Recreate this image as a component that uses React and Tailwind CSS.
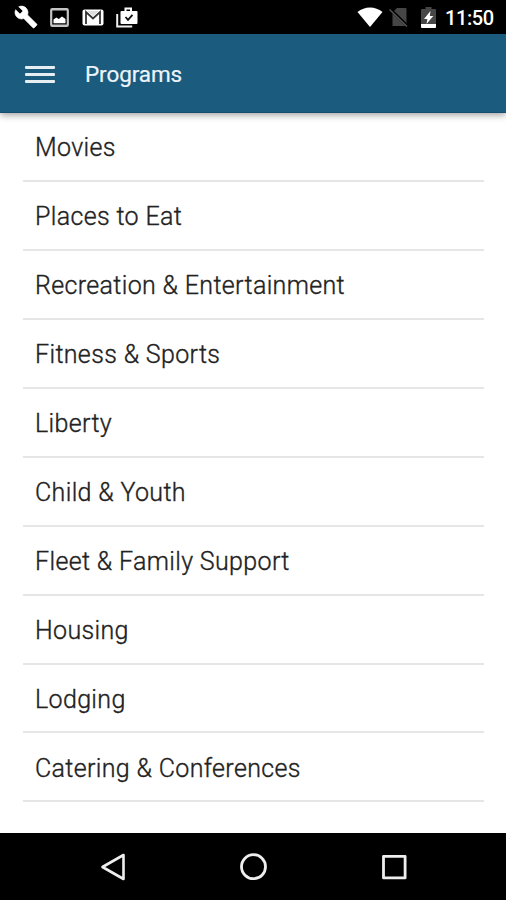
const programs = [
  'Movies',
  'Places to Eat',
  'Recreation & Entertainment',
  'Fitness & Sports',
  'Liberty',
  'Child & Youth',
  'Fleet & Family Support',
  'Housing',
  'Lodging',
  'Catering & Conferences',
];

function StatusBar() {
  return (
    <div className="flex h-[34px] shrink-0 items-center justify-between bg-black pr-[12px] pl-[14px] text-white">
      <div className="flex items-center">
        <svg className="h-6 w-6" viewBox="0 0 24 24" fill="#fff">
          <path d="M22.7 19l-9.1-9.1c.9-2.3.4-5-1.5-6.9-2-2-5-2.4-7.4-1.3L9 6 6 9 1.6 4.7C.4 7.1.9 10.1 2.9 12.1c1.9 1.9 4.6 2.4 6.9 1.5l9.1 9.1c.4.4 1 .4 1.4 0l2.3-2.3c.5-.4.5-1.1.1-1.4z" stroke="#fff" strokeWidth=".6" />
        </svg>
        <svg className="ml-[12px] h-[19px] w-[19px]" viewBox="0 0 19 18" preserveAspectRatio="none">
          <rect x="1.2" y="1.2" width="16.6" height="15.6" rx="1" fill="#000" stroke="#c4c4c4" strokeWidth="2.2" />
          <path d="M3.500 14.500V11l2.800-2 2.500 1.500 3.200-2.500 3.500 2.500v4z" fill="#fff" />
        </svg>
        <svg className="ml-[13px] h-[17px] w-[22px]" viewBox="0 0 22 17">
          <rect x=".5" y=".5" width="21" height="16" rx="2" fill="#fff" />
          <path d="M4 15V3l7 6.500L18 3v12" fill="none" stroke="#333" strokeWidth="1.8" />
          <path d="M5 2h12l-6 5z" fill="#ddd" />
        </svg>
        <svg className="ml-[12px] h-[21px] w-[22px]" viewBox="0 0 22 21">
          <path d="M1.200 7v12.500h15" fill="none" stroke="#eee" strokeWidth="2" />
          <path d="M9.500 4V1.500h5.500V4" fill="none" stroke="#fff" strokeWidth="2" />
          <rect x="4.500" y="4" width="17" height="13" rx="1" fill="#fff" />
          <path d="M9.500 10l2.500 2.800 4.500-5" fill="none" stroke="#111" strokeWidth="1.8" />
        </svg>
      </div>
      <div className="flex items-center">
        <svg className="h-5 w-[26px]" viewBox="0 0 26 20" fill="#fff">
          <path d="M.5 5C4.2 2 8.4.5 13 .5S21.8 2 25.500 5L13 20z" />
        </svg>
        <svg className="ml-[6px] h-5 w-[20px]" viewBox="0 0 20 20">
          <path d="M8 1h8.500q1 0 1 1v17h-14V5.500z" fill="#464646" />
          <path d="M0 1l19 18.500" stroke="#000" strokeWidth="3" />
          <path d="M.5 2.500l17.500 17" stroke="#555" strokeWidth="1.4" />
        </svg>
        <svg className="ml-[12px] h-[21px] w-[15px]" viewBox="0 0 15 21">
          <path d="M4.500 0h6v2H14q1 0 1 1v17q0 1-1 1H1q-1 0-1-1V3q0-1 1-1h3.500z" fill="#464646" />
          <path d="M0 17h15v3q0 1-1 1H1q-1 0-1-1z" fill="#fff" />
          <path d="M9.500 4L3 12h3.400L5.500 17l6.800-8H8.800z" fill="#fff" />
        </svg>
        <span className="ml-[9px] w-[49px] whitespace-nowrap pt-[2px] text-[20px] leading-6 font-medium tracking-[-0.4px]">11:50</span>
      </div>
    </div>
  );
}

function AppBar() {
  return (
    <header className="z-10 flex h-[79px] shrink-0 items-center border-b border-[#174e70] bg-[#1b5b7e] pt-[2px] pl-[25px] shadow-[0_2px_7px_rgba(0,0,0,0.38)]">
      <div className="flex w-[30px] flex-col gap-[4px]">
        <span className="h-[3px] rounded-[1px] bg-[#e7eef2]" />
        <span className="h-[3px] rounded-[1px] bg-[#e7eef2]" />
        <span className="h-[3px] rounded-[1px] bg-[#e7eef2]" />
      </div>
      <h1 className="ml-[30px] text-[22.500px] leading-7 tracking-[-0.1px] text-[#edf4fa] [-webkit-text-stroke:0.2px_#edf4fa]">Programs</h1>
    </header>
  );
}

function NavigationBar() {
  return (
    <nav className="flex h-[67px] shrink-0 items-center justify-between bg-black pr-[98px] pl-[100px]">
      <svg className="h-7 w-7" viewBox="0 0 28 28" fill="none" stroke="#eee" strokeWidth="2.600" strokeLinejoin="round">
        <path d="M23.500 2v24L2.500 14z" />
      </svg>
      <svg className="h-7 w-7" viewBox="0 0 28 28" fill="none" stroke="#eee" strokeWidth="2.800">
        <circle cx="13.500" cy="13.700" r="12" />
      </svg>
      <svg className="h-7 w-7" viewBox="0 0 28 28" fill="none" stroke="#eee" strokeWidth="2.800" strokeLinejoin="round">
        <rect x="3.500" y="3.300" width="21.600" height="21.600" />
      </svg>
    </nav>
  );
}

export default function App() {
  return (
    <div className="flex h-[900px] w-[506px] flex-col overflow-hidden bg-white font-['Roboto',sans-serif]">
      <StatusBar />
      <AppBar />
      <ul className="min-h-0 flex-1 pr-[22px] pl-[23px]">
        {programs.map((name) => (
          <li
            key={name}
            className="flex h-[68.950px] items-center border-b-2 border-[#e6e6e6] pt-[4px] pl-[12px] text-[25px] leading-8 font-light tracking-[0.35px] text-[#222] [-webkit-text-stroke:0.35px_#222]"
          >
            {name}
          </li>
        ))}
      </ul>
      <NavigationBar />
    </div>
  );
}
